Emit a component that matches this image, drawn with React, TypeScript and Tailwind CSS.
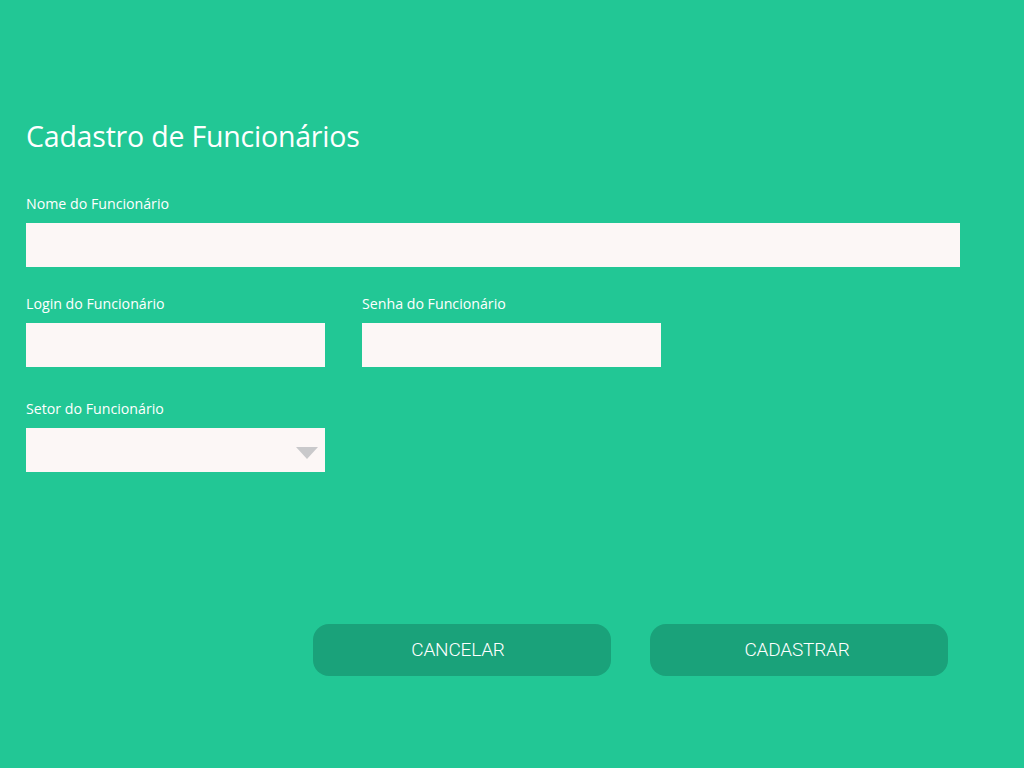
import React from "react";

const Label: React.FC<{ text: string }> = ({ text }) => (
  <label className="block text-[14.2px] leading-[18px] text-white mb-[10px]">{text}</label>
);

export default function App() {
  return (
    <div
      className="w-[1024px] h-[768px] bg-[#22c795] overflow-hidden"
      style={{ fontFamily: '"Open Sans", "Noto Sans", sans-serif' }}
    >
      <div className="pl-[26px] pt-[118px]">
        <h1 className="text-[28.5px] leading-[36px] text-white tracking-[-0.2px]">Cadastro de Funcionários</h1>

        <div className="mt-[41px]">
          <Label text="Nome do Funcionário" />
          <input className="block w-[934px] h-[44px] bg-[#fcf7f6] outline-none px-3" />
        </div>

        <div className="mt-[28px] flex gap-[37px]">
          <div>
            <Label text="Login do Funcionário" />
            <input className="block w-[299px] h-[44px] bg-[#fcf7f6] outline-none px-3" />
          </div>
          <div>
            <Label text="Senha do Funcionário" />
            <input type="password" className="block w-[299px] h-[44px] bg-[#fcf7f6] outline-none px-3" />
          </div>
        </div>

        <div className="mt-[33px]">
          <Label text="Setor do Funcionário" />
          <div className="w-[299px] h-[44px] bg-[#fcf7f6] flex items-start justify-end pr-[7px] pt-[19px]">
            <svg width="22" height="12" viewBox="0 0 22 12">
              <polygon points="0,0 22,0 11,12" fill="#c9c9cb" />
            </svg>
          </div>
        </div>

        <div className="mt-[152px] pl-[287px] flex gap-[39px]">
          <button className="w-[298px] h-[52px] rounded-[16px] bg-[#1aa27a] text-white text-[19px] font-light tracking-[-0.2px] pr-[8px]" style={{ fontFamily: '"Roboto", sans-serif' }}>
            CANCELAR
          </button>
          <button className="w-[298px] h-[52px] rounded-[16px] bg-[#1aa27a] text-white text-[19px] font-light tracking-[-0.2px] pr-[4px]" style={{ fontFamily: '"Roboto", sans-serif' }}>
            CADASTRAR
          </button>
        </div>
      </div>
    </div>
  );
}
